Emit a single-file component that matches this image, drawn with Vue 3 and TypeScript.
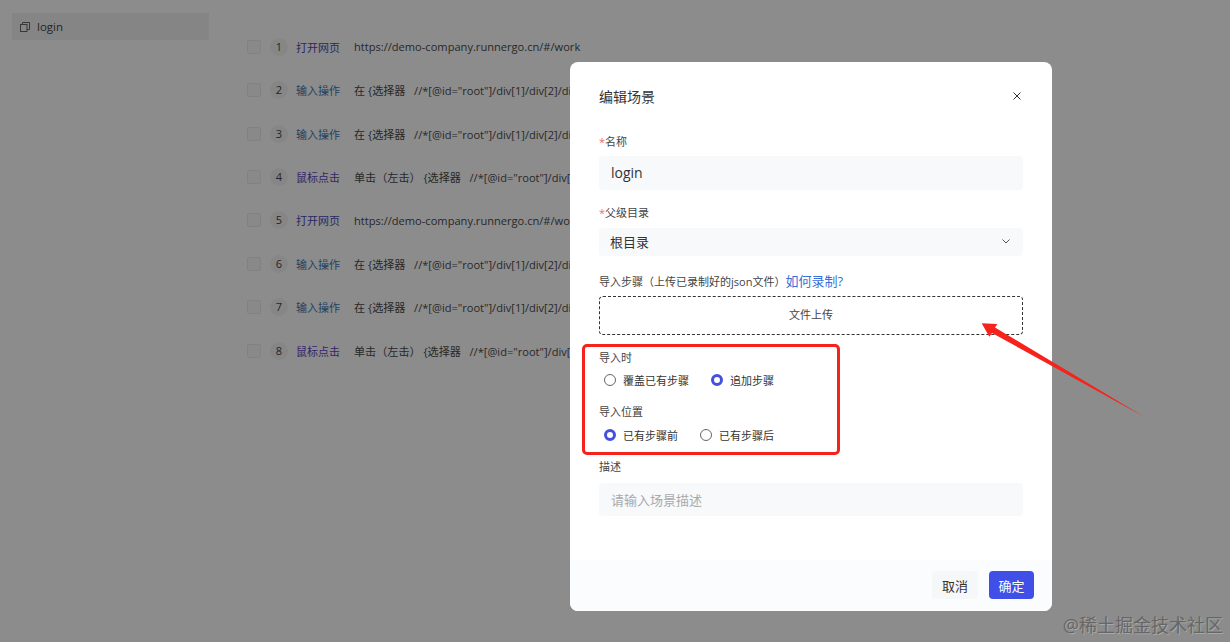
<script setup lang="ts">
interface Step {
  no: number
  kind: string
  tone: string
  text: string
}

const addr = 'https://demo-company.runnergo.cn/#/work'
const input = '在 {选择器 \u00a0\u00a0//*[@id="root"]/div[1]/div[2]/div[1]/div/input'
const click = '单击（左击） {选择器 \u00a0\u00a0//*[@id="root"]/div[1]/div[2]/div[1]/button'

const steps: Step[] = [
  { no: 1, kind: '打开网页', tone: 'open', text: addr },
  { no: 2, kind: '输入操作', tone: 'type', text: input },
  { no: 3, kind: '输入操作', tone: 'type', text: input },
  { no: 4, kind: '鼠标点击', tone: 'click', text: click },
  { no: 5, kind: '打开网页', tone: 'open', text: addr },
  { no: 6, kind: '输入操作', tone: 'type', text: input },
  { no: 7, kind: '输入操作', tone: 'type', text: input },
  { no: 8, kind: '鼠标点击', tone: 'click', text: click }
]
</script>

<template>
  <div class="Page">
    <aside class="side">
      <div class="scene">
        <svg width="10" height="10" viewBox="0 0 10 10" fill="none" stroke="#666" stroke-width="1">
          <rect x="0.5" y="2.5" width="6.5" height="7" />
          <path d="M2.5 2.5V0.5H9.5V7.5H7" />
        </svg>
        <span>login</span>
      </div>
    </aside>

    <main class="steps">
      <div v-for="s in steps" :key="s.no" class="step">
        <span class="check"></span>
        <span class="no">{{ s.no }}</span>
        <span class="kind" :class="s.tone">{{ s.kind }}</span>
        <span class="text">{{ s.text }}</span>
      </div>
    </main>

    <div class="mask"></div>

    <section class="dialog">
      <header class="head">
        <h2>编辑场景</h2>
        <svg width="8" height="8" viewBox="0 0 8 8" stroke="#333" stroke-width="1">
          <path d="M0.5 0.5L7.5 7.5M7.5 0.5L0.5 7.5" />
        </svg>
      </header>

      <div class="body">
        <div class="lbl first"><i>*</i>名称</div>
        <div class="field name">login</div>

        <div class="lbl second"><i>*</i>父级目录</div>
        <div class="field select">
          <span>根目录</span>
          <svg width="8" height="5" viewBox="0 0 8 5" fill="none" stroke="#555" stroke-width="1">
            <path d="M0.5 0.5L4 4L7.5 0.5" />
          </svg>
        </div>

        <div class="lbl third">
          导入步骤（上传已录制好的json文件）<a>如何录制?</a>
        </div>
        <div class="upload">文件上传</div>

        <div class="lbl fourth">导入时</div>
        <div class="radios">
          <span class="radio"><b></b>覆盖已有步骤</span>
          <span class="radio on"><b></b>追加步骤</span>
        </div>

        <div class="lbl fifth">导入位置</div>
        <div class="radios">
          <span class="radio on"><b></b>已有步骤前</span>
          <span class="radio"><b></b>已有步骤后</span>
        </div>

        <div class="lbl sixth">描述</div>
        <div class="field desc">请输入场景描述</div>
      </div>

      <footer class="foot">
        <button class="btn">取消</button>
        <button class="btn primary">确定</button>
      </footer>
    </section>

    <div class="mark-box"></div>
    <svg class="mark-arrow" width="1230" height="642" viewBox="0 0 1230 642">
      <polygon
        points="981.7,323.3 997.3,324 995,327.5 1144,416.7 992,333 989.3,336.7"
        fill="#f5231b"
      />
    </svg>

    <div class="watermark">@稀土掘金技术社区</div>
  </div>
</template>

<style>
html,
body {
  margin: 0;
  background: #fff;
}
</style>

<style scoped>
/** layout */
.Page {
  position: relative;
  display: flex;
  width: 1230px;
  height: 642px;
  overflow: hidden;
  background: #fff;
  font-family: 'Open Sans', 'Noto Sans CJK SC', sans-serif;
  color: #333;
}
.side {
  width: 247px;
  flex: none;
  padding: 13px 0 0 12px;
  box-sizing: border-box;
}
.scene {
  display: flex;
  align-items: center;
  gap: 7px;
  width: 197px;
  height: 27px;
  padding-left: 8px;
  box-sizing: border-box;
  background: #f3f3f3;
  font-size: 11.5px;
  color: #444;
}
.steps {
  padding-top: 25px;
  flex: 1;
  min-width: 0;
}
.step {
  display: flex;
  align-items: center;
  height: 43.43px;
  font-size: 11px;
  white-space: nowrap;
}
.check {
  width: 12px;
  height: 12px;
  border: 1px solid #ececec;
  border-radius: 2px;
  background: #f9f9f9;
}
.no {
  width: 18px;
  height: 18px;
  margin: 0 8px 0 9px;
  border-radius: 50%;
  background: #f5f5f5;
  text-align: center;
  line-height: 18px;
  font-size: 11px;
  color: #444;
}
.kind {
  width: 58px;
  flex: none;
  font-size: 11px;
}
.open {
  color: #4a4ab8;
}
.type {
  color: #3f78b0;
}
.click {
  color: #5f46c0;
}
.text {
  font-size: 11.1px;
  color: #4a4a4a;
}

/** overlay */
.mask {
  position: absolute;
  inset: 0;
  background: rgba(0, 0, 0, 0.45);
}
.dialog {
  position: absolute;
  left: 570px;
  top: 62px;
  width: 482px;
  height: 549px;
  display: flex;
  flex-direction: column;
  background: #fff;
  border-radius: 8px;
  overflow: hidden;
}
.head {
  display: flex;
  justify-content: space-between;
  align-items: center;
  height: 20px;
  margin-top: 25px;
  padding: 0 31px 0 29px;
}
.head h2 {
  margin: 0;
  font-size: 14px;
  font-weight: 400;
  line-height: 20px;
}
.head svg {
  margin-top: -2px;
}

/** form */
.body {
  padding: 0 29px;
}
.lbl {
  height: 16px;
  line-height: 16px;
  font-size: 11px;
  color: #444;
}
.lbl i {
  color: #f06a6a;
  font-style: normal;
}
.lbl a {
  font-size: 13px;
  color: #3a6fd8;
}
.first {
  margin: 27px 0 6px;
}
.second {
  margin: 15px 0 7px;
}
.third {
  margin: 17px 0 7px;
}
.fourth {
  margin-top: 15px;
}
.fifth {
  margin-top: 14px;
}
.sixth {
  margin: 14px 0 8px;
}
.field {
  display: flex;
  align-items: center;
  height: 34px;
  padding: 0 12px;
  box-sizing: border-box;
  border-radius: 4px;
  background: #f8f9fb;
  font-size: 14px;
  color: #333;
}
.name {
  padding-bottom: 1px;
}
.select {
  justify-content: space-between;
  height: 28px;
  padding: 0 13px 2px 11px;
  font-size: 13px;
}
.desc {
  height: 33px;
  padding-bottom: 1px;
  font-size: 13px;
  color: #aaa;
}
.upload {
  height: 39px;
  box-sizing: border-box;
  border: 1px dashed #333;
  border-radius: 4px;
  text-align: center;
  line-height: 35px;
  font-size: 11px;
  color: #444;
}
.radios {
  display: flex;
  gap: 22px;
  height: 20px;
  margin: 4px 0 0 5px;
}
.fifth + .radios {
  margin-top: 5px;
}
.radio {
  display: flex;
  align-items: center;
  gap: 7px;
  font-size: 11px;
  color: #333;
}
.radio b {
  width: 12px;
  height: 12px;
  box-sizing: border-box;
  border: 1px solid #666;
  border-radius: 50%;
  background: #fff;
}
.radio.on b {
  border: 3.5px solid #4450e0;
}

/** footer */
.foot {
  display: flex;
  justify-content: flex-end;
  gap: 11px;
  margin-top: auto;
  padding: 11px 18px 12px 0;
  background: #fbfcfd;
}
.btn {
  width: 46px;
  height: 28px;
  padding: 0;
  border: 0;
  border-radius: 4px;
  background: #f6f7f8;
  font-family: inherit;
  font-size: 13px;
  color: #333;
}
.primary {
  width: 45px;
  background: #3f4fe8;
  color: #fff;
}

/** annotations */
.mark-box {
  position: absolute;
  left: 582px;
  top: 344px;
  width: 252px;
  height: 105px;
  border: 3px solid #f5231b;
  border-radius: 5px;
}
.mark-arrow {
  position: absolute;
  left: 0;
  top: 0;
}
.watermark {
  position: absolute;
  right: 7px;
  top: 613px;
  font-size: 18px;
  line-height: 24px;
  color: #666;
  text-shadow: 1px 1px 0 rgba(255, 255, 255, 0.25);
  white-space: nowrap;
}
</style>
